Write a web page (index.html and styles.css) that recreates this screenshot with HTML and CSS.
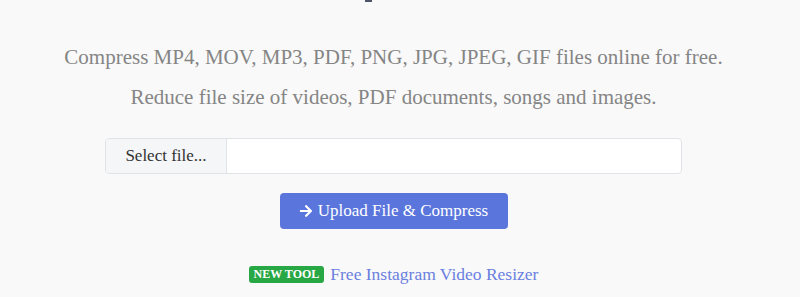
FILE: index.html
```html
<!DOCTYPE html>
<html lang="en">
<head>
  <meta charset="UTF-8">
  <title>Compress files online</title>
  <link rel="stylesheet" href="styles.css">
</head>

<body>

  <div class="title-tail"></div>

  <main class="compressor">

    <p class="lead">Compress MP4, MOV, MP3, PDF, PNG, JPG, JPEG, GIF files online for free.</p>
    <p class="lead">Reduce file size of videos, PDF documents, songs and images.</p>

    <form class="upload-form">
      <label class="file-group">
        <span class="file-button">Select file...</span>
        <span class="file-name"></span>
      </label>

      <button type="button" class="upload-button">
        <svg class="arrow" viewBox="0 0 448 512" width="14" height="14">
          <path fill="currentColor" d="M190.5 66.9l22.2-22.2c9.4-9.4 24.6-9.4 33.9 0L441 239c9.4 9.4 9.4 24.6 0 33.9L246.6 467.3c-9.4 9.4-24.6 9.4-33.9 0l-22.2-22.2c-9.5-9.5-9.3-25 .4-34.3L311.4 296H24c-13.3 0-24-10.7-24-24v-32c0-13.3 10.7-24 24-24h287.4L190.9 101.2c-9.8-9.3-10-24.8-.4-34.3z"/>
        </svg>
        Upload File &amp; Compress
      </button>
    </form>

    <div class="new-tool">
      <span class="badge">NEW TOOL</span>
      <a href="#resizer">Free Instagram Video Resizer</a>
    </div>

  </main>

</body>
</html>
```

FILE: styles.css
```css
/* Reset */
* {
  margin: 0;
  padding: 0;
  box-sizing: border-box;
}

body {
  background: #f9f9f9;
  font-family: "Liberation Serif", "DejaVu Serif", serif;
  color: #888;
  width: 800px;
  height: 297px;
  overflow: hidden;
}

/* bit of the page title cut off at the top */
.title-tail {
  width: 7px;
  height: 2px;
  margin-left: 365px;
  background: #4f5566;
}

.compressor {
  display: flex;
  flex-direction: column;
  align-items: center;
  width: 787px;
  padding-top: 43px;
}

.lead {
  font-size: 21px;
  line-height: 25px;
  margin-bottom: 15px;
  color: #858585;
}

.upload-form {
  display: flex;
  flex-direction: column;
  align-items: center;
  gap: 19px;
  margin-top: 13px;
}

.file-group {
  display: flex;
  width: 577px;
  height: 36px;
  background: #fff;
  border: 1px solid #e1e3e8;
  border-radius: 4px;
  overflow: hidden;
  cursor: pointer;
}

.file-button {
  display: flex;
  align-items: center;
  justify-content: center;
  width: 121px;
  background: #f5f6f8;
  border-right: 1px solid #e1e3e8;
  color: #333;
  font-size: 17px;
}

.file-name {
  flex: 1;
}

.upload-button {
  display: flex;
  align-items: center;
  justify-content: center;
  gap: 5px;
  width: 228px;
  height: 36px;
  background: #5a76dc;
  border: none;
  border-radius: 4px;
  color: #fff;
  font-family: inherit;
  font-size: 17px;
  cursor: pointer;
}

.arrow {
  display: block;
}

.new-tool {
  display: flex;
  align-items: center;
  gap: 6px;
  margin-top: 35px;
}

.badge {
  background: #28a745;
  color: #fff;
  font-size: 12px;
  font-weight: bold;
  padding: 2px 5px;
  border-radius: 3px;
  line-height: 13px;
}

.new-tool a {
  color: #6a7fe0;
  text-decoration: none;
  font-size: 17.5px;
}
```
